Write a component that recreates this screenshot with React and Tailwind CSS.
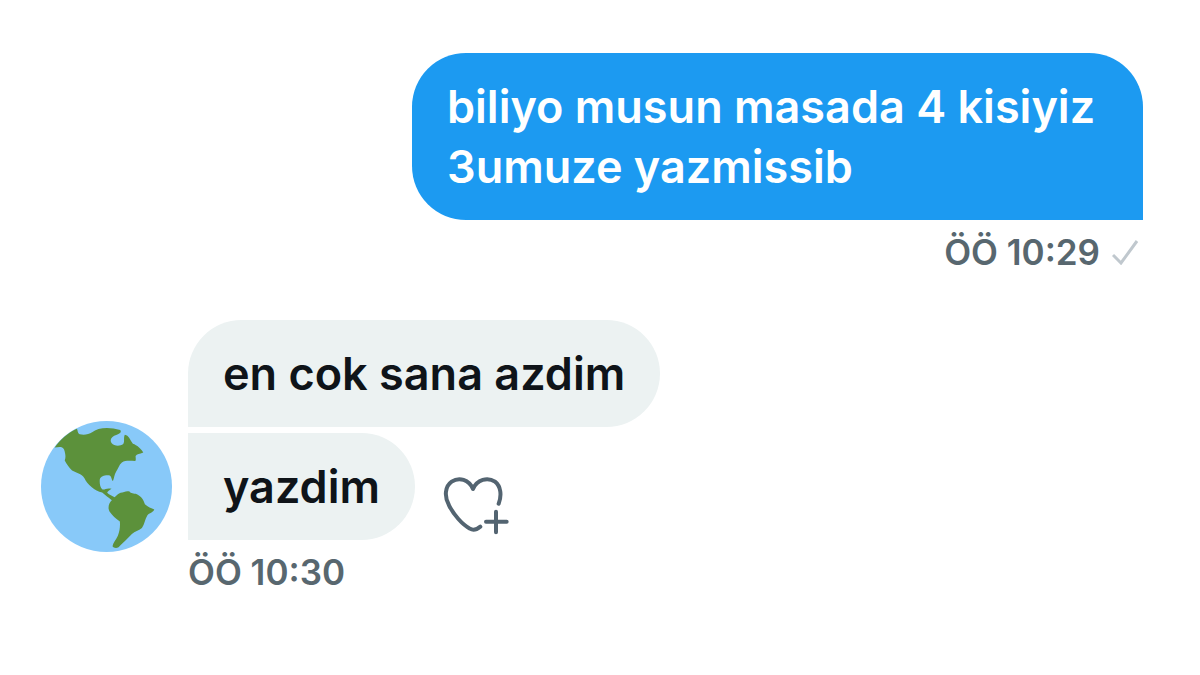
import React from 'react';
import clsx from 'clsx';

const sent = [
    { id: 1, text: 'biliyo musun masada 4 kisiyiz 3umuze yazmissib' },
];

const received = [
    { id: 2, text: 'en cok sana azdim' },
    { id: 3, text: 'yazdim', reactable: true },
];

const GlobeAvatar = () => (
    <svg viewBox="35 33 392 392" className="size-[131px] shrink-0" role="img" aria-label="Avatar">
        <circle cx="231" cy="229" r="196" fill="#88c9f9" />
        <path
            fill="#5c913b"
            d="M76 112C92 89 113 70 142 56C146 60 143 68 151 73C163 76 178 74 188 67C205 52 240 50 272 60C277 66 271 70 262 74C245 79 240 90 246 99C254 109 272 109 281 102C286 95 281 82 286 74C298 76 300 87 310 101C322 105 335 116 341 127C330 132 322 131 318 138C318 145 320 149 317 153C302 152 288 150 277 157C268 164 266 176 260 184C254 194 254 204 250 213C245 208 247 200 241 196C230 193 214 197 211 207C210 218 211 231 219 238C226 240 231 232 246 236C240 241 234 243 233 248C240 254 248 258 255 261C262 257 264 251 273 248C283 246 290 241 300 244C304 251 312 249 322 252C336 259 342 269 346 282C354 291 366 293 374 298C371 307 359 308 353 316C346 328 345 342 337 353C327 361 316 362 307 371C295 384 279 398 267 411C260 415 252 413 249 408C251 396 260 387 265 376C271 362 272 347 271 334C259 325 248 316 240 304C234 293 238 278 247 270C237 262 228 256 218 247C207 244 195 239 187 231C176 222 169 213 165 204C156 190 140 188 128 181C119 172 112 162 106 151C110 142 108 130 104 118C98 107 86 112 76 112Z"
        />
    </svg>
);

const HeartPlusIcon = () => (
    <svg viewBox="36 34 198 180" className="h-[60px] w-[66px]" fill="none" stroke="currentColor" strokeWidth="12" strokeLinecap="round" strokeLinejoin="round" aria-hidden="true">
        <path d="M203 117C213 91 209 64 192 51C170 36 138 44 126 73C114 44 84 36 62 51C42 65 39 95 54 122C68 150 94 180 117 192C128 199 137 195 148 186" />
        <path d="M165 171H227M195 141V203" />
    </svg>
);

const CheckIcon = () => (
    <svg viewBox="0 0 27 26" className="h-[26px] w-[27px] text-[#c0c8ce]" fill="none" stroke="currentColor" strokeWidth="3" aria-hidden="true">
        <path d="M1 16L9 24L25 2" />
    </svg>
);

const Bubble = ({ text, className }) => (
    <p className={clsx('w-fit max-w-[731px] px-[35px] pt-6 pb-[23px] text-[45px] leading-[60px] font-semibold', className)}>
        {text}
    </p>
);

export default function App() {
    return (
        <main className="min-h-screen bg-white pt-[53px] pr-[57px] pb-8 pl-[41px] font-['Inter',sans-serif]">
            {/* sent */}
            <section className="flex flex-col items-end">
                {sent.map((message) => (
                    <Bubble key={message.id} text={message.text} className="rounded-[54px] rounded-br-none bg-[#1c9af1] text-white" />
                ))}
                <div className="mt-2 flex items-center gap-3 pr-1 text-[35px] leading-[48px] font-semibold text-[#58676f]">
                    <time>ÖÖ 10:29</time>
                    <CheckIcon />
                </div>
            </section>

            {/* received */}
            <section className="mt-11 flex items-end gap-4">
                <div className="mb-11">
                    <GlobeAvatar />
                </div>
                <div className="flex flex-col items-start">
                    <div className="flex flex-col gap-[6px]">
                        {received.map((message, index) => (
                            <div key={message.id} className="flex items-end gap-7">
                                <Bubble
                                    text={message.text}
                                    className={clsx('rounded-r-[54px] bg-[#ecf2f2] text-[#0f1419]', index === 0 && 'rounded-tl-[54px]')}
                                />
                                {message.reactable && (
                                    <button type="button" aria-label="React" className="mb-1 text-[#536471]">
                                        <HeartPlusIcon />
                                    </button>
                                )}
                            </div>
                        ))}
                    </div>
                    <time className="mt-2 text-[35px] leading-[48px] font-semibold text-[#58676f]">ÖÖ 10:30</time>
                </div>
            </section>
        </main>
    );
}
